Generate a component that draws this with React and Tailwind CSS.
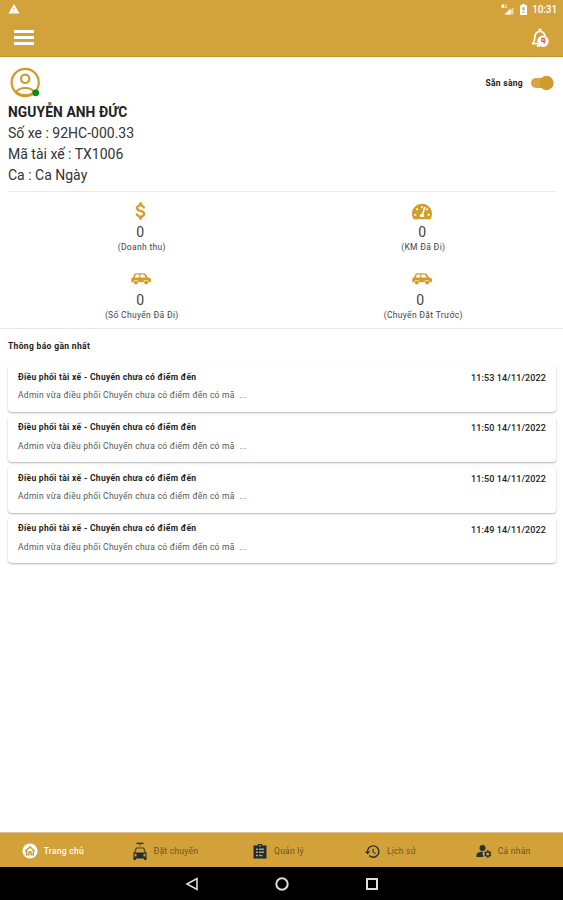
import React from "react";
import { MdWarning, MdHistory, MdManageAccounts } from "react-icons/md";
import { FaTachometerAlt } from "react-icons/fa";

const notices = ["11:53", "11:50", "11:50", "11:49"];

function Avatar() {
  return (
    <svg className="h-[31px] w-[31px]" viewBox="0 0 31 31" fill="none" stroke="#cf9b2f" strokeWidth="2.2">
      <circle cx="15.2" cy="15.5" r="13.6" />
      <circle cx="15.2" cy="11.8" r="4.2" />
      <path d="M6.200 25c1.800-2.800 5-4 9-4s7.200 1.200 9 4M7.200 25.800c4.500 3.200 11.500 3.200 16 0" />
      <circle cx="25.700" cy="25.800" r="3.400" fill="#0d8a1c" stroke="none" />
    </svg>
  );
}

function Dollar() {
  return (
    <svg className="h-[22px] w-[22px]" viewBox="0 0 24 24">
      <path
        fill="#d39d28"
        stroke="#d39d28"
        strokeWidth="0.5"
        d="M11.800 10.900c-2.270-.59-3-1.200-3-2.150 0-1.090 1.010-1.850 2.700-1.850 1.780 0 2.440.85 2.500 2.100h2.210c-.07-1.720-1.120-3.300-3.210-3.810V3h-3v2.160c-1.940.42-3.500 1.680-3.500 3.610 0 2.310 1.910 3.460 4.700 4.130 2.500.6 3 1.480 3 2.410 0 .69-.49 1.790-2.700 1.790-2.060 0-2.870-.92-2.980-2.100h-2.200c.12 2.190 1.760 3.420 3.680 3.830V21h3v-2.150c1.950-.37 3.500-1.500 3.500-3.550 0-2.840-2.430-3.810-4.700-4.400z"
      />
    </svg>
  );
}

function Car() {
  return (
    <svg className="h-[14px] w-5" viewBox="0 0 20 14">
      <path fill="#d39d28" fillRule="evenodd" d="M5 1.300h8c.8 0 1.300.3 1.800 1l2.200 3.300 1.800.5c.8.200 1.100.8 1.100 1.500v2.600h-2.200a2.700 2.700 0 0 0-5.300 0H7.500a2.700 2.700 0 0 0-5.300 0H.2V7.500c0-1.200.6-1.800 1.700-1.900l1.500-3.300c.3-.7.8-1 1.600-1zM5 2.500 3.700 5.500h4.500v-3zM9.400 2.500v3h5.400l-2-3z" />
      <circle cx="4.850" cy="10.600" r="2" fill="#d39d28" />
      <circle cx="15.150" cy="10.600" r="2" fill="#d39d28" />
    </svg>
  );
}

function Bell() {
  return (
    <svg className="h-5 w-[18px]" viewBox="0 0 18 20">
      <path d="M2 15.200c1.500-1.500 1.700-3 1.700-5.200 0-3.500 1.700-6 4.600-6.500V1.500h1.400v2c2.500.5 4.300 2.600 4.500 5.500M.8 15.700H8M5.800 17.800h3" fill="none" stroke="#fff" strokeWidth="1.700" />
      <circle cx="12" cy="13.200" r="5.700" fill="#fff" />
      <path d="M10.500 10.300h2.700v5.500M10.800 10.500v2.800h2" fill="none" stroke="#ee4a5c" strokeWidth="1.300" />
    </svg>
  );
}

function HomeIcon() {
  return (
    <svg className="h-4 w-4 shrink-0" viewBox="0 0 16 16">
      <circle cx="8" cy="8" r="7.600" fill="#fff" />
      <path d="M3.200 8.300 8 3.900l4.800 4.400M4.700 7.500v4.300h2.200V9h2.200v2.800h2.200V7.500" fill="none" stroke="#c99831" strokeWidth="1.300" />
    </svg>
  );
}

function TaxiIcon() {
  return (
    <svg className="h-[19px] w-4 shrink-0" viewBox="0 0 16 19">
      <path d="M4.500 1.400h7" stroke="#29312f" strokeWidth="1.500" />
      <path d="M8 2v3" stroke="#8c7338" strokeWidth="1.200" />
      <path d="M2.500 11.500 4.300 6h7.400l1.800 5.500" fill="none" stroke="#473f2b" strokeWidth="1.200" />
      <path fill="#1d2d33" fillRule="evenodd" d="M1.500 10.500h13V18h-2.300v-1.500H3.800V18H1.500zM2.600 11.800v2.700h1.900v-2.700zm8.900 0v2.700h1.900v-2.700z" />
    </svg>
  );
}

function ClipboardIcon() {
  return (
    <svg className="h-[15px] w-[14px] shrink-0" viewBox="0 0 14 15">
      <path fill="#1d2d33" d="M.5 1.500h4.200a2.300 2.300 0 0 1 4.600 0h4.200v13H.5z" />
      <circle cx="7" cy="1.900" r=".8" fill="#d3a139" />
      <path d="M3 5.200h2m1 0h5M3 8.300h2m1 0h5M3 11.400h2m1 0h3.500" stroke="#c49a68" strokeWidth="1.500" />
    </svg>
  );
}

function Stat({ icon, label, shift }) {
  return (
    <div className="flex h-[68px] flex-col items-center">
      <div className="flex h-5 items-center justify-center">{icon}</div>
      <div className={"flex h-[22px] items-center text-[14px] text-[#444] " + shift}>0</div>
      <div className="flex h-[9px] items-center whitespace-nowrap pl-[2px] text-[8.500px] tracking-[0.32px] text-[#444]">{label}</div>
    </div>
  );
}

function Tab({ icon, label, active, spacing }) {
  return (
    <div className={"flex items-center justify-center gap-1.5 pt-[2px] " + spacing}>
      <span className="flex w-4 justify-center">{icon}</span>
      <span className={"whitespace-nowrap text-[8.500px] tracking-[0.25px]" + (active ? " font-medium text-white" : " text-[#6b5527]")}>{label}</span>
    </div>
  );
}

export default function App() {
  return (
    <div className="flex h-[900px] w-[563px] flex-col overflow-hidden bg-white font-['Roboto','Noto_Sans',sans-serif] text-[#222]">
      <header className="h-[57px] shrink-0 border-b border-[#c7912a] bg-[#d3a33b] text-white">
        <div className="flex h-[18px] items-center justify-between pl-2 pr-[6px]">
          <MdWarning className="h-3 w-3" />
          <div className="flex items-center">
            <svg className="h-[11px] w-[13px]" viewBox="0 0 13 11">
              <path d="M6 10.500 12.500 3v7.500z" fill="#ecd5a2" />
              <path d="M3.500 10.500h6V4.500z" fill="#fff" />
              <path d="M1 1h2v2.500H1zM4.500 1H6M4.500 3.500H6" fill="#fff" stroke="#fff" />
            </svg>
            <svg className="ml-1.5 h-[11px] w-[7px]" viewBox="0 0 7 11">
              <path d="M0 1.200h2V0h3v1.200h2V11H0z" fill="#fff" />
              <path d="M2.500 3.200h2v3h-2zM2.500 7.500h2v1.200h-2z" fill="#d3a33b" />
            </svg>
            <span className="ml-[5px] pt-px text-[10px] font-medium leading-none tracking-[-0.1px]">10:31</span>
          </div>
        </div>
        <div className="flex h-[39px] items-center justify-between pl-[14px] pr-[14px]">
          <div className="flex flex-col gap-[3px]">
            <span className="h-[3px] w-5 bg-white" />
            <span className="h-[3px] w-5 bg-white" />
            <span className="h-[3px] w-5 bg-white" />
          </div>
          <Bell />
        </div>
      </header>

      <main className="flex-1">
        <section className="ml-2 mr-[7px] h-[135px] border-b border-[#eee9e5] pt-[10px]">
          <div className="flex h-[34px] items-start justify-between pl-[2px] pr-[2px]">
            <Avatar />
            <div className="flex items-center gap-2 pt-[8px]">
              <span className="text-[8.500px] font-bold leading-4 tracking-[0.3px]">Sẵn sàng</span>
              <svg className="h-4 w-[23px]" viewBox="0 0 23 16">
                <rect x="0" y="3" width="20" height="10" rx="5" fill="#d6a643" />
                <circle cx="15.500" cy="8" r="7.200" fill="#cf9b2f" />
              </svg>
            </div>
          </div>
          <div className="text-[14px] leading-[21px] text-[#333]">
            <h1 className="h-[22px] text-[13.800px] font-bold leading-[23px] tracking-[0.1px] text-[#222]">NGUYỄN ANH ĐỨC</h1>
            <p>Số xe : 92HC-000.33</p>
            <p>Mã tài xế : TX1006</p>
            <p>Ca : Ca Ngày</p>
          </div>
        </section>

        <section className="h-[137px] border-b border-[#eee2df]">
          <div className="grid grid-cols-2 pt-[9px]">
            <Stat icon={<Dollar />} label="(Doanh thu)" shift="pr-px" />
            <Stat icon={<FaTachometerAlt className="h-[19px] w-[20px] text-[#d39d28]" />} label="(KM Đã Đi)" shift="" />
            <Stat icon={<Car />} label="(Số Chuyến Đã Đi)" shift="pr-px" />
            <Stat icon={<Car />} label="(Chuyến Đặt Trước)" shift="pr-[4px]" />
          </div>
        </section>

        <section className="pl-2 pr-[7px]">
          <h2 className="h-9 pt-[9px] text-[8.500px] font-bold leading-4 tracking-[0.34px]">Thông báo gần nhất</h2>
          <div className="flex flex-col gap-[4px]">
            {notices.map((time, i) => (
              <article key={i} className="h-[46.600px] rounded-[4px] bg-white px-[10px] pt-[4px] shadow-[0_1px_2px_rgba(0,0,0,0.3)]">
                <div className="flex h-4 items-center justify-between whitespace-nowrap">
                  <h3 className="text-[8.500px] font-bold tracking-[0.3px]">Điều phối tài xế - Chuyến chưa có điểm đến</h3>
                  <time className="pt-[3px] text-[9px] font-medium tracking-[0.12px]">{time} 14/11/2022</time>
                </div>
                <p className="mt-[2px] whitespace-pre text-[8.500px] leading-4 tracking-[0.27px] text-[#555]">Admin vừa điều phối Chuyến chưa có điểm đến có mã  ...</p>
              </article>
            ))}
          </div>
        </section>
      </main>

      <nav className="grid h-[35px] shrink-0 grid-cols-5 border-t border-[#ddc492] bg-[#d3a139] text-[#26322f]">
        <Tab icon={<HomeIcon />} label="Trang chủ" active spacing="pr-[7px]" />
        <Tab icon={<TaxiIcon />} label="Đặt chuyến" spacing="pr-[8px]" />
        <Tab icon={<ClipboardIcon />} label="Quản lý" spacing="pr-[7px]" />
        <Tab icon={<MdHistory className="h-[17px] w-[17px] shrink-0" />} label="Lịch sử" spacing="pr-[7px]" />
        <Tab icon={<MdManageAccounts className="h-[18px] w-[18px] shrink-0" />} label="Cá nhân" spacing="pr-[7px]" />
      </nav>
      <footer className="flex h-[33px] shrink-0 items-center justify-center gap-[76px] bg-black">
        <svg className="h-[14px] w-[14px]" viewBox="0 0 14 14" fill="none" stroke="#ddd" strokeWidth="1.600"><path d="M2 7 12 1.500v11z" /></svg>
        <svg className="h-[14px] w-[14px]" viewBox="0 0 14 14" fill="none" stroke="#ddd" strokeWidth="2"><circle cx="7" cy="7" r="5.700" /></svg>
        <svg className="h-[14px] w-[14px]" viewBox="0 0 14 14" fill="none" stroke="#ddd" strokeWidth="2"><path d="M2 2h10v10H2z" /></svg>
      </footer>
    </div>
  );
}
